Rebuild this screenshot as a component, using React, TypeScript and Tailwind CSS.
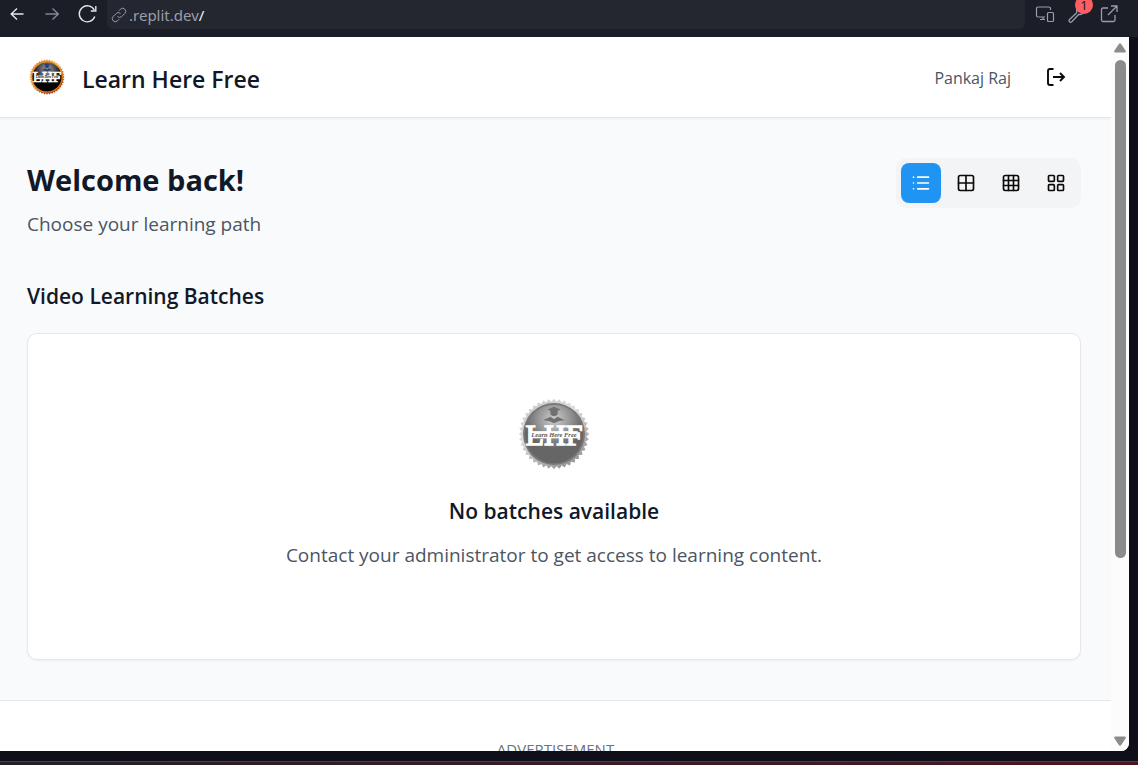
import { useState } from 'react';
import { Grid2x2, Grid3x3, LayoutGrid, List } from 'lucide-react';

function scallop(radius: number, teeth: number, depth: number) {
  const points: string[] = [];
  for (let i = 0; i < teeth * 2; i++) {
    const angle = (Math.PI * i) / teeth;
    const r = i % 2 === 0 ? radius : radius - depth;
    points.push(`${(50 + r * Math.sin(angle)).toFixed(2)},${(50 - r * Math.cos(angle)).toFixed(2)}`);
  }
  return points.join(' ');
}

function Seal({ id, className, gray = false }: { id: string; className: string; gray?: boolean }) {
  return (
    <svg viewBox="0 0 100 100" className={className} role="img" aria-label="LHF logo">
      <defs>
        <linearGradient id={`${id}-rim`} x1="0" y1="0" x2="0.6" y2="1">
          <stop offset="0" stopColor={gray ? '#c4c4c4' : '#d9661c'} />
          <stop offset="0.45" stopColor={gray ? '#dcdcdc' : '#f7b545'} />
          <stop offset="1" stopColor={gray ? '#989898' : '#a63a16'} />
        </linearGradient>
        <radialGradient id={`${id}-face`} cx="0.5" cy="0.25" r="0.5">
          <stop offset="0" stopColor={gray ? '#cfcfcf' : '#a5a8ae'} />
          <stop offset="1" stopColor={gray ? '#666666' : '#050505'} />
        </radialGradient>
      </defs>
      <polygon points={scallop(49, 40, 4)} fill={`url(#${id}-rim)`} />
      <circle cx="50" cy="50" r="43" fill={gray ? '#777777' : '#e88a24'} />
      <circle cx="50" cy="50" r="40.500" fill={`url(#${id}-face)`} />
      <g fill={gray ? '#707070' : '#28427c'}>
        <path d="M50 12l9 4-9 4-9-4z" />
        <path d="M45 18h10v5q-5 5-10 0z" />
        <path d="M35 31l10-5 5 3 5-3 10 5-8 1-7 3-7-3z" />
      </g>
      <text
        x="50"
        y="65"
        textAnchor="middle"
        fontFamily="Liberation Serif, serif"
        fontSize="42"
        fill="#fff"
        stroke="#fff"
        strokeWidth="2"
      >
        LHF
      </text>
      <rect x="17" y="46" width="66" height="10" fill="#fff" />
      <text
        x="50"
        y="54"
        textAnchor="middle"
        fontFamily="Liberation Serif, serif"
        fontStyle="italic"
        fontWeight="700"
        fontSize="9"
        fill={gray ? '#555' : '#111'}
      >
        Learn Here Free
      </text>
    </svg>
  );
}

function BrowserBar() {
  return (
    <div className="flex h-[37px] shrink-0 items-start bg-[#1b1d27] text-[#9a9dab]">
      <div className="flex h-7 items-center gap-[15px] pl-2">
        <button type="button" aria-label="Back" className="text-[#e4e6ee]">
          <svg viewBox="0 0 20 20" className="size-5" fill="none" stroke="currentColor" strokeWidth="1.4">
            <path d="M15.500 10H3M9 4.500L3.200 10 9 15.500" />
          </svg>
        </button>
        <button type="button" aria-label="Forward" className="text-[#858895]">
          <svg viewBox="0 0 20 20" className="size-5" fill="none" stroke="currentColor" strokeWidth="1.4">
            <path d="M2.500 10H15M9.500 4.500l5.800 5.500-5.800 5.500" />
          </svg>
        </button>
        <button type="button" aria-label="Reload" className="text-[#e4e6ee]">
          <svg viewBox="0 0 20 20" className="size-5" fill="none" stroke="currentColor" strokeWidth="1.4">
            <path d="M16.800 12.500a8 8 0 1 1-.5-6.500M17.800 2v5h-5" />
          </svg>
        </button>
      </div>
      <div className="ml-[9px] flex h-[29px] flex-1 items-center gap-0.5 rounded-b-md bg-[#252730] pl-1">
        <svg viewBox="0 0 16 16" className="size-4 shrink-0" fill="none" stroke="currentColor" strokeWidth="1">
          <path d="M6.500 9.500a3 3 0 0 0 4.300 0l3-3a3 3 0 0 0-4.300-4.300L8 3.700" />
          <path d="M9.500 6.500a3 3 0 0 0-4.300 0l-3 3a3 3 0 0 0 4.300 4.300L8 12.300" />
        </svg>
        <span className="font-['Noto_Sans',sans-serif] text-[15px] leading-6">
          .replit.dev<span className="text-[#f2f3f7]">/</span>
        </span>
      </div>
      <div className="flex h-7 items-center gap-3 pr-[19px] pl-2.5">
        <button type="button" aria-label="Devices">
          <svg viewBox="0 0 20 20" className="size-5" fill="none" stroke="currentColor" strokeWidth="1.2">
            <path d="M10 13H3a1.500 1.500 0 0 1-1.500-1.500v-7A1.500 1.500 0 0 1 3 3h11a1.500 1.500 0 0 1 1.500 1.500V6M5 15.500h5M8 13v2.500" />
            <rect x="12.500" y="8.500" width="6" height="9" rx="1" />
          </svg>
        </button>
        <button type="button" aria-label="Developer tools, 1 issue" className="relative">
          <svg viewBox="0 0 20 20" className="size-5" fill="none" stroke="currentColor" strokeWidth="1.300">
            <path d="M10 8.500l-7.500 7a1.600 1.600 0 0 0 2.300 2.300l7-7.500a4.500 4.500 0 0 0 5.500-5.500M10 8.500a4.500 4.500 0 0 1 1-5" />
          </svg>
          <span className="absolute -top-2 -right-1.5 flex size-[18px] items-center justify-center rounded-full bg-[#ff5f62] font-['Noto_Sans',sans-serif] text-[13px] leading-none text-[#1b1d27]">
            1
          </span>
        </button>
        <button type="button" aria-label="Open in new tab">
          <svg viewBox="0 0 20 20" className="size-5" fill="none" stroke="currentColor" strokeWidth="1.300">
            <path d="M9 4H4a1.500 1.500 0 0 0-1.500 1.500v10.500A1.500 1.500 0 0 0 4 17.500h10.500a1.500 1.500 0 0 0 1.500-1.500v-5M12 2h6v6M18 2L9 11" />
          </svg>
        </button>
      </div>
    </div>
  );
}

const views = [
  { name: 'List view', Icon: List },
  { name: 'Large grid', Icon: Grid2x2 },
  { name: 'Small grid', Icon: Grid3x3 },
  { name: 'Card view', Icon: LayoutGrid },
];

function ViewSwitch() {
  const [selected, setSelected] = useState('List view');
  return (
    <div className="flex gap-[5px] rounded-[10px] bg-[#f3f4f6] p-[5px]">
      {views.map(({ name, Icon }) => (
        <button
          key={name}
          type="button"
          aria-label={name}
          aria-pressed={selected === name}
          onClick={() => setSelected(name)}
          className={
            selected === name
              ? 'flex size-10 items-center justify-center rounded-lg bg-[#2094f3] text-white'
              : 'flex size-10 items-center justify-center rounded-lg text-[#0c0a09]'
          }
        >
          <Icon size={20} strokeWidth={2} />
        </button>
      ))}
    </div>
  );
}

function Scrollbar() {
  return (
    <div className="flex w-[18px] shrink-0 flex-col items-center bg-[#fcfcfc] pt-1.5 pb-[5px] text-[#8b8b8b]" aria-hidden="true">
      <svg viewBox="0 0 12 10" className="h-2.5 w-3" fill="currentColor">
        <path d="M5 .8q1-1.200 2 0l4.600 7q.7 1.700-1 1.700H1.400q-1.700 0-1-1.700z" />
      </svg>
      <div className="flex w-[11px] flex-1 flex-col pt-[7px] pb-3">
        <div className="h-3/4 rounded-full bg-[#8b8b8b]" />
      </div>
      <svg viewBox="0 0 12 10" className="h-2.5 w-3 rotate-180" fill="currentColor">
        <path d="M5 .8q1-1.200 2 0l4.600 7q.7 1.700-1 1.700H1.400q-1.700 0-1-1.700z" />
      </svg>
    </div>
  );
}

export default function App() {
  return (
    <div className="flex h-screen flex-col overflow-hidden bg-[#0e0f18] font-['Open_Sans','Noto_Sans',sans-serif]">
      <BrowserBar />
      <div className="mr-[9px] flex min-h-0 flex-1 overflow-hidden rounded-br-lg bg-white">
        <div className="min-w-0 flex-1 overflow-hidden bg-[#f9fafb]">
          <header className="flex h-[81px] items-center border-b border-gray-200 bg-white pr-[30px] pl-[27px] shadow-xs">
            <Seal id="brand" className="size-10 p-0.5" />
            <h1 className="ml-[15px] pt-1 text-[23px] leading-8 font-semibold text-[#111827]">Learn Here Free</h1>
            <span className="ml-auto pt-0.5 text-base text-[#4b5563]">Pankaj Raj</span>
            <button type="button" aria-label="Log out" className="ml-5 flex h-11 w-[50px] items-center justify-center text-[#0c0a09]">
              <svg viewBox="0 0 20 20" className="size-5" fill="none" stroke="currentColor" strokeWidth="1.900">
                <path d="M7.500 2H4a2 2 0 0 0-2 2v12a2 2 0 0 0 2 2h3.500M7 10h11M14 6l4 4-4 4" />
              </svg>
            </button>
          </header>

          <main className="pt-10 pr-[30px] pb-10 pl-[27px]">
            <div className="flex items-start justify-between">
              <div>
                <h2 className="text-[29px] leading-[43px] font-bold text-[#111827]">Welcome back!</h2>
                <p className="mt-2 text-[19px] leading-[30px] text-[#4b5563]">Choose your learning path</p>
              </div>
              <ViewSwitch />
            </div>

            <h3 className="mt-10 text-[21px] leading-[34px] font-semibold text-[#111827]">Video Learning Batches</h3>
            <section className="mt-5 flex h-[327px] flex-col items-center rounded-[10px] border border-gray-200 bg-white pt-16 text-center shadow-xs">
              <Seal id="empty" gray className="size-[72px]" />
              <h4 className="mt-6 text-[21px] leading-[34px] font-semibold text-[#111827]">No batches available</h4>
              <p className="mt-3 text-[19px] leading-[30px] text-[#4b5563]">
                Contact your administrator to get access to learning content.
              </p>
            </section>
          </main>

          <footer className="border-t border-gray-200 bg-white pt-9 pb-10 text-center text-[15px] leading-6 text-[#6b7280]">
            ADVERTISEMENT
          </footer>
        </div>
        <Scrollbar />
      </div>
      <div className="flex h-3.5 shrink-0 flex-col justify-end">
        <div className="h-1 border-t border-[#4a434b] bg-linear-to-r from-[#241e25] to-[#4a1520]" />
      </div>
    </div>
  );
}
